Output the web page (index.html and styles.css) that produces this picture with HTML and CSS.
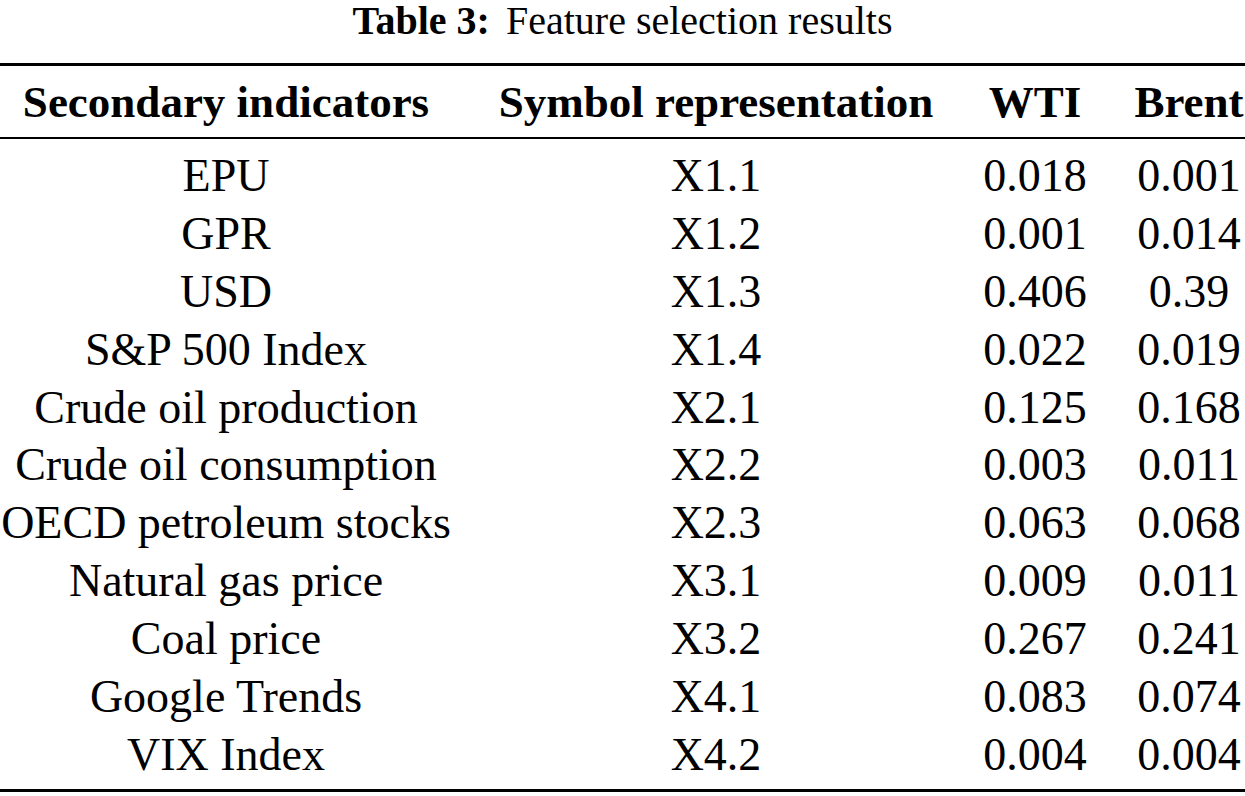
FILE: index.html
```html
<!DOCTYPE html>
<html lang="en">
<head>
<meta charset="utf-8">
<title>Table 3: Feature selection results</title>
<link rel="stylesheet" href="styles.css">
</head>
<body>
<div class="page">
  <div class="caption"><span class="label">Table 3:</span><span class="title">Feature selection results</span></div>
  <table class="results">
    <colgroup>
      <col class="c1"><col class="c2"><col class="c3"><col class="c4">
    </colgroup>
    <thead>
      <tr>
        <th>Secondary indicators</th>
        <th>Symbol representation</th>
        <th>WTI</th>
        <th class="last">Brent</th>
      </tr>
    </thead>
    <tbody>
      <tr><td>EPU</td><td>X1.1</td><td>0.018</td><td class="last">0.001</td></tr>
      <tr><td>GPR</td><td>X1.2</td><td>0.001</td><td class="last">0.014</td></tr>
      <tr><td>USD</td><td>X1.3</td><td>0.406</td><td class="last">0.39</td></tr>
      <tr><td>S&amp;P 500 Index</td><td>X1.4</td><td>0.022</td><td class="last">0.019</td></tr>
      <tr><td>Crude oil production</td><td>X2.1</td><td>0.125</td><td class="last">0.168</td></tr>
      <tr><td>Crude oil consumption</td><td>X2.2</td><td>0.003</td><td class="last">0.011</td></tr>
      <tr><td>OECD petroleum stocks</td><td>X2.3</td><td>0.063</td><td class="last">0.068</td></tr>
      <tr><td>Natural gas price</td><td>X3.1</td><td>0.009</td><td class="last">0.011</td></tr>
      <tr><td>Coal price</td><td>X3.2</td><td>0.267</td><td class="last">0.241</td></tr>
      <tr><td>Google Trends</td><td>X4.1</td><td>0.083</td><td class="last">0.074</td></tr>
      <tr><td>VIX Index</td><td>X4.2</td><td>0.004</td><td class="last">0.004</td></tr>
    </tbody>
  </table>
</div>
</body>
</html>
```

FILE: styles.css
```css
html, body {
  margin: 0;
  padding: 0;
  background: #ffffff;
}

body {
  font-family: "Liberation Serif", "Times New Roman", serif;
  color: #000000;
}

.page {
  width: 1245px;
}

.caption {
  height: 65px;
  margin-top: -2px;
  font-size: 40px;
  line-height: 45px;
  text-align: center;
}

.caption .label {
  font-weight: bold;
  margin-right: 16px;
}

.results {
  width: 1245px;
  border-collapse: collapse;
  table-layout: fixed;
  border-top: 3px solid #000;
  border-bottom: 3px solid #000;
}

.c1 { width: 452px; }
.c2 { width: 528px; }
.c3 { width: 110px; }
.c4 { width: 155px; }

.results th,
.results td {
  padding: 0;
  text-align: center;
  white-space: nowrap;
  line-height: 57.9px;
}

.results th {
  font-size: 45px;
  font-weight: bold;
  padding-top: 8px;
  padding-bottom: 5px;
  border-bottom: 2px solid #000;
}

.results td {
  font-size: 46px;
  font-weight: normal;
}

.results th.last,
.results td.last {
  padding-left: 43px;
}

.results tbody tr:first-child td {
  padding-top: 8px;
}

.results tbody tr:last-child td {
  padding-bottom: 5px;
}
```
